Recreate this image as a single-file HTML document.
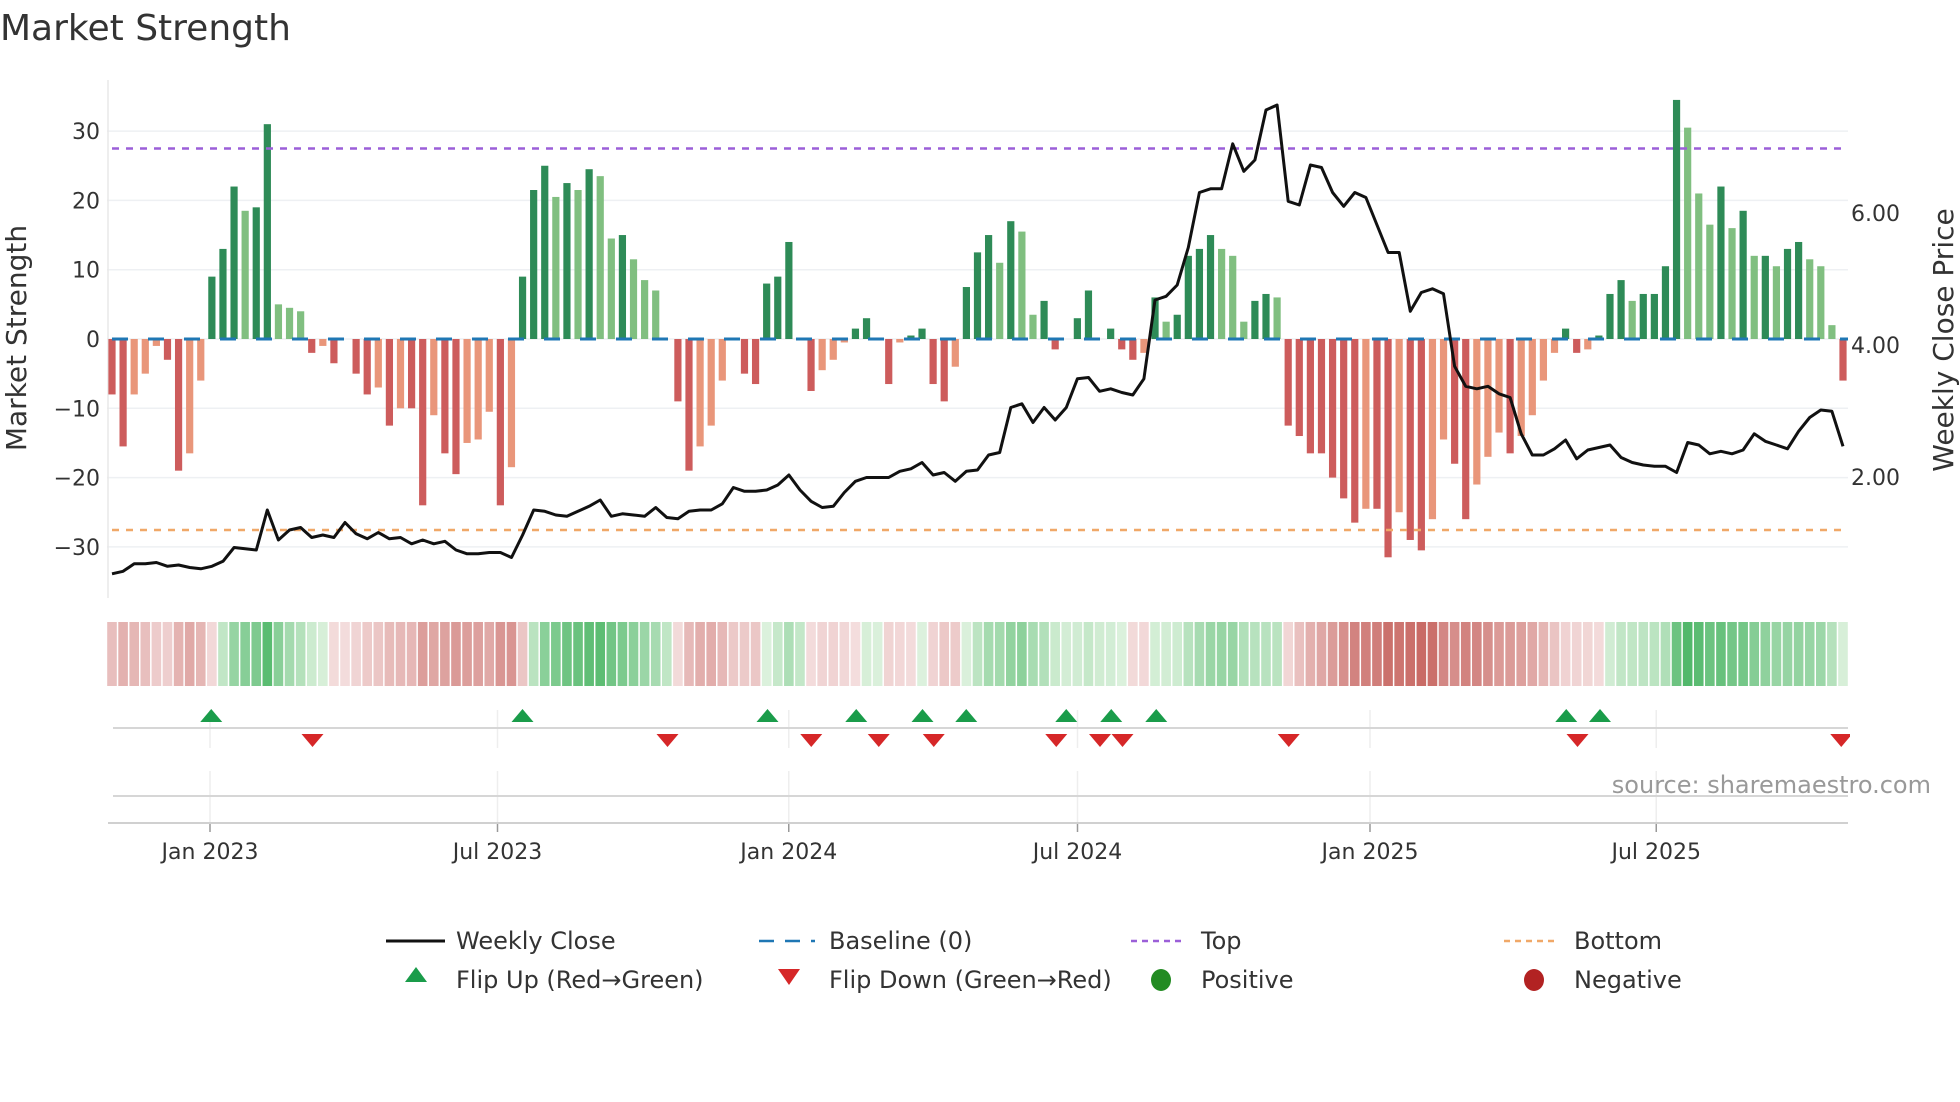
<!DOCTYPE html>
<html><head><meta charset="utf-8">
<style>
html,body{margin:0;padding:0;background:#fff;width:1960px;height:1102px;overflow:hidden}
svg{display:block}
text{font-family:"DejaVu Sans","Liberation Sans",sans-serif;fill:#333}
</style></head><body>
<svg id="s" width="1960" height="1102" xmlns="http://www.w3.org/2000/svg"></svg>
<script>
const S=document.getElementById('s');let h='';
const vals=[-8,-15.5,-8,-5,-1,-3,-19,-16.5,-6,9,13,22,18.5,19,31,5,4.5,4,-2,-1,-3.5,0,-5,-8,-7,-12.5,-10,-10,-24,-11,-16.5,-19.5,-15,-14.5,-10.5,-24,-18.5,9,21.5,25,20.5,22.5,21.5,24.5,23.5,14.5,15,11.5,8.5,7,0,-9,-19,-15.5,-12.5,-6,0,-5,-6.5,8,9,14,0,-7.5,-4.5,-3,-0.5,1.5,3,0,-6.5,-0.5,0.5,1.5,-6.5,-9,-4,7.5,12.5,15,11,17,15.5,3.5,5.5,-1.5,0,3,7,0,1.5,-1.5,-3,-2,6,2.5,3.5,12,13,15,13,12,2.5,5.5,6.5,6,-12.5,-14,-16.5,-16.5,-20,-23,-26.5,-24.5,-24.5,-31.5,-25,-29,-30.5,-26,-14.5,-18,-26,-21,-17,-13.5,-16.5,-14,-11,-6,-2,1.5,-2,-1.5,0.5,6.5,8.5,5.5,6.5,6.5,10.5,34.5,30.5,21,16.5,22,16,18.5,12,12,10.5,13,14,11.5,10.5,2,-6];
const N=vals.length,x0=112,x1=1843,dx=(x1-x0)/(N-1);
const X=i=>x0+i*dx, Y=v=>339-6.93*v;
[30,20,10,0,-10,-20,-30].forEach(v=>{h+=`<line x1="107" x2="1848" y1="${Y(v)}" y2="${Y(v)}" stroke="#eef0f3" stroke-width="1.5"/>`;
h+=`<text x="100" y="${Y(v)+8}" font-size="22" text-anchor="end">${v<0?'\u2212'+(-v):v}</text>`;});
h+=`<line x1="108" x2="108" y1="80" y2="598" stroke="#e8e8e8" stroke-width="1.5"/>`;
for(let i=0;i<N;i++){const v=vals[i];if(v===0)continue;const p=i?Math.abs(vals[i-1]):0;const dark=Math.abs(v)>=p||Math.sign(v)!==Math.sign(vals[i-1]);
const c=v>0?(dark?'#2e8b57':'#80bf80'):(dark?'#cd5c5c':'#e9967a');
const y=Math.min(Y(v),339),hh=Math.abs(Y(v)-339);h+=`<rect x="${X(i)-3.6}" y="${y}" width="7.2" height="${hh}" fill="${c}"/>`;}
h+=`<line x1="112" x2="1848" y1="339" y2="339" stroke="#1f77b4" stroke-width="3" stroke-dasharray="16,20"/>`;
h+=`<line x1="112" x2="1848" y1="148.5" y2="148.5" stroke="#9b5fd8" stroke-width="2.5" stroke-dasharray="7,7"/>`;
h+=`<line x1="112" x2="1848" y1="530" y2="530" stroke="#f0a868" stroke-width="2.5" stroke-dasharray="7,7"/>`;
const py=[459,457,451,451,450,453,452,454,455,453,449,438,439,440,408,432,424,422,430,428,430,418,427,431,426,431,430,435,432,435,433,440,443,443,442,442,446,428,408,409,412,413,409,405,400,413,411,412,413,406,414,415,409,408,408,403,390,393,393,392,388,380,392,401,406,405,394,385,382,382,382,377,375,370,380,378,385,377,376,364,362,326,323,338,326,336,326,303,302,313,311,314,316,303,240,237,228,198,154,151,151,115,137,128,88,84,161,164,132,134,154,165,154,158,180,202,202,249,234,231,235,293,309,311,309,315,318,347,364,364,359,352,367,360,358,356,366,370,372,373,373,378,354,356,363,361,363,360,347,353,356,359,345,334,328,329,357];
let pts=py.map((y,i)=>`${(X(i)).toFixed(1)},${(y*1.25).toFixed(1)}`).join(' ');
h+=`<polyline points="${pts}" fill="none" stroke="#111" stroke-width="3" stroke-linejoin="round"/>`;
[[6,213],[4,345],[2,477]].forEach(([p,y])=>h+=`<text x="1851" y="${y+8}" font-size="22">${p}.00</text>`);
let s=0;for(let i=0;i<N;i++){s=i?s*0.55+vals[i]*0.45:vals[i];const t=Math.min(1,Math.abs(s)/30);let c;
if(s>=0){c=`rgb(${Math.round(222-170*t)},${Math.round(242-70*t)},${Math.round(222-140*t)})`;}else{c=`rgb(${Math.round(244-45*t)},${Math.round(222-120*t)},${Math.round(222-125*t)})`;}
h+=`<rect x="${X(i)-4.8}" y="622" width="9.6" height="64" fill="${c}"/>`;}
const ticks=[[168,'Jan 2023'],[398,'Jul 2023'],[631,'Jan 2024'],[862,'Jul 2024'],[1096,'Jan 2025'],[1325,'Jul 2025']];
ticks.forEach(([x,l])=>{x*=1.25;h+=`<line x1="${x}" x2="${x}" y1="710" y2="748" stroke="#eee" stroke-width="1.5"/><line x1="${x}" x2="${x}" y1="771" y2="822" stroke="#eee" stroke-width="1.5"/><line x1="${x}" x2="${x}" y1="823" y2="832" stroke="#999" stroke-width="1.5"/><text x="${x}" y="859" font-size="22" text-anchor="middle">${l}</text>`;});
h+=`<line x1="113" x2="1848" y1="728" y2="728" stroke="#d6d6d6" stroke-width="2"/>`;
h+=`<line x1="113" x2="1848" y1="796" y2="796" stroke="#d6d6d6" stroke-width="2"/>`;
h+=`<line x1="108" x2="1848" y1="823" y2="823" stroke="#d0d0d0" stroke-width="2"/>`;
const up=[169,418,614,685,738,773,853,889,925,1253,1280],dn=[250,534,649,703,747,845,880,898,1031,1262,1473];
up.forEach(x=>{x*=1.25;h+=`<polygon points="${x-11},${722} ${x+11},${722} ${x},${709}" fill="#1a9c4a"/>`;});
h+=`<clipPath id="cp"><rect x="0" y="0" width="1850" height="1102"/></clipPath><g clip-path="url(#cp)">`;
dn.forEach(x=>{x*=1.25;h+=`<polygon points="${x-11},${734} ${x+11},${734} ${x},${747}" fill="#d62728"/>`;});
h+=`</g>`;
h+=`<text x="1931" y="793" font-size="24" text-anchor="end" style="fill:#999">source: sharemaestro.com</text>`;
h+=`<text x="0" y="40" font-size="36">Market Strength</text>`;
h+=`<text transform="translate(26,338) rotate(-90)" font-size="28" text-anchor="middle">Market Strength</text>`;
h+=`<text transform="translate(1953,340) rotate(-90)" font-size="28" text-anchor="middle">Weekly Close Price</text>`;
const L1=949,L2=988;
h+=`<line x1="386" x2="445" y1="${L1-8}" y2="${L1-8}" stroke="#111" stroke-width="3"/><text x="456" y="${L1}" font-size="24">Weekly Close</text>`;
h+=`<line x1="759" x2="815" y1="${L1-8}" y2="${L1-8}" stroke="#1f77b4" stroke-width="2.5" stroke-dasharray="15,11"/><text x="829" y="${L1}" font-size="24">Baseline (0)</text>`;
h+=`<line x1="1131" x2="1186" y1="${L1-8}" y2="${L1-8}" stroke="#9b5fd8" stroke-width="2.5" stroke-dasharray="6,5"/><text x="1201" y="${L1}" font-size="24">Top</text>`;
h+=`<line x1="1504" x2="1559" y1="${L1-8}" y2="${L1-8}" stroke="#f0a868" stroke-width="2.5" stroke-dasharray="6,5"/><text x="1574" y="${L1}" font-size="24">Bottom</text>`;
h+=`<polygon points="405,${L2-6} 427,${L2-6} 416,${L2-21}" fill="#1a9c4a"/><text x="456" y="${L2}" font-size="24">Flip Up (Red\u2192Green)</text>`;
h+=`<polygon points="778,${L2-19} 800,${L2-19} 789,${L2-3}" fill="#d62728"/><text x="829" y="${L2}" font-size="24">Flip Down (Green\u2192Red)</text>`;
h+=`<ellipse cx="1161" cy="${L2-8}" rx="10" ry="11" fill="#228b22"/><text x="1201" y="${L2}" font-size="24">Positive</text>`;
h+=`<ellipse cx="1534" cy="${L2-8}" rx="10" ry="11" fill="#b22222"/><text x="1574" y="${L2}" font-size="24">Negative</text>`;
S.innerHTML=h;
</script>
</body></html>
